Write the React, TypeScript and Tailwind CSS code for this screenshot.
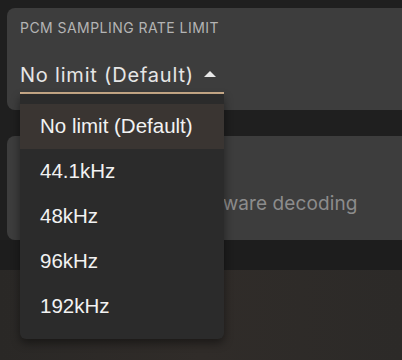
import React, { useState } from 'react';

const opciones = ['No limit (Default)', '44.1kHz', '48kHz', '96kHz', '192kHz'];

export default function App() {
  const [abierto] = useState(true);
  const [valor] = useState(0);

  return (
    <div
      className="flex min-h-[360px] flex-col overflow-hidden bg-[#1f1f1f] pt-2"
      style={{ fontFamily: 'Inter, "Open Sans", sans-serif' }}
    >
      {/* Tarjeta: limite de muestreo PCM */}
      <div className="relative z-10 -mr-4 ml-[7px] h-[102px] rounded-lg bg-[#3d3d3d] px-[13px] pt-[10px]">
        <p className="text-[14px] leading-5 tracking-[0.45px] text-[#b4b4b4]">PCM SAMPLING RATE LIMIT</p>

        <div className="relative mt-[26px] w-[204px]">
          <button className="flex h-[30px] w-full items-center border-b-2 border-[#cdae8c] pb-[6px] text-left">
            <span className="text-[20px] leading-6 tracking-[0.8px] text-[#e6e6e6]">{opciones[valor]}</span>
            <svg width="12" height="6" viewBox="0 0 12 6" className="ml-[10px] mt-[-2px]">
              <path d="M0 6 L6 0 L12 6 Z" fill="#e8e8e8" />
            </svg>
          </button>

          {abierto && (
            <ul
              className="absolute left-0 top-[30px] w-[204px] rounded-b-md bg-[#2b2b2b] py-[10px] shadow-[0_4px_10px_rgba(0,0,0,0.45)]"
              style={{ fontFamily: '"Liberation Sans", Arial, sans-serif' }}
            >
              {opciones.map((o, i) => (
                <li
                  key={o}
                  className={`flex h-[45px] items-center px-5 text-[20.5px] text-[#f2f2f2] ${i === valor ? 'bg-[#3a3532]' : ''}`}
                >
                  {o}
                </li>
              ))}
            </ul>
          )}
        </div>
      </div>

      {/* Tarjeta: decodificacion */}
      <div className="-mr-4 ml-[7px] mt-[26px] h-[104px] rounded-lg bg-[#3d3d3d] px-[13px] pt-[12px]">
        <p className="text-[14px] leading-5 tracking-[0.45px] text-[#b4b4b4]">DECODER</p>
        <p className="mt-[24px] pl-[12px] text-[19px] leading-6 tracking-[0.1px] text-[#8c8c8c]">Use software or hardware decoding</p>
      </div>

      <div className="h-[30px] bg-[#1d1d1d]" />
      <div className="flex-1 bg-gradient-to-r from-[#2a2826] via-[#302c29] to-[#2c2a28]" />
    </div>
  );
}
